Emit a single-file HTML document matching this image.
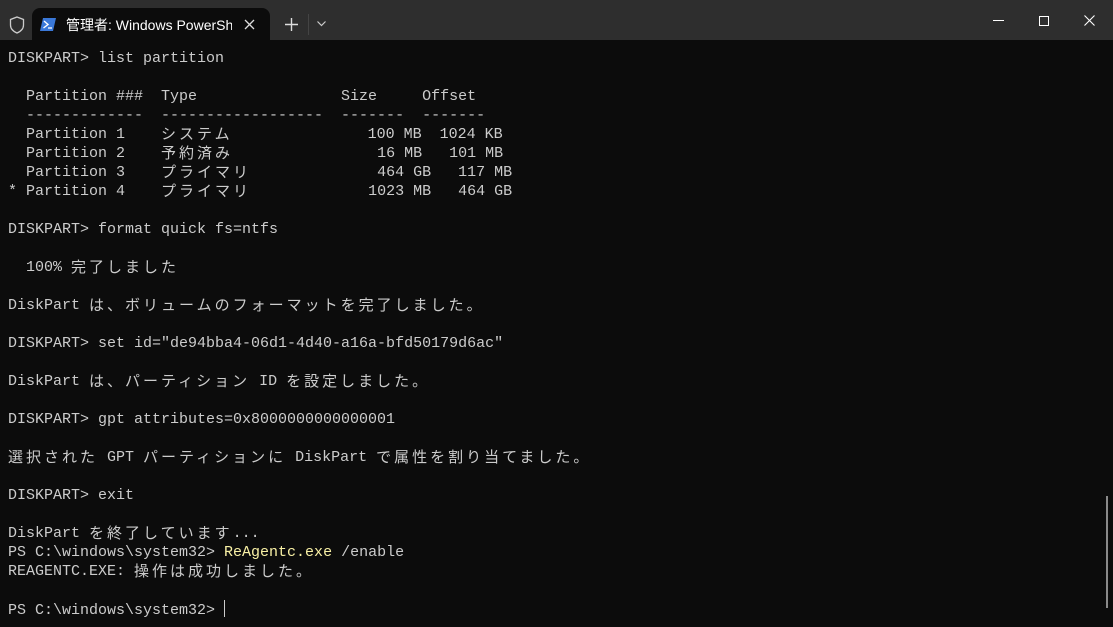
<!DOCTYPE html>
<html><head><meta charset="utf-8"><style>
html,body{margin:0;padding:0;width:1113px;height:627px;overflow:hidden;background:#0c0c0c}
.title{position:absolute;left:0;top:0;width:1113px;height:40px;background:#2e2e2e}
.tab{position:absolute;left:32px;top:8px;width:238px;height:32px;background:#0c0c0c;border-radius:8px 8px 0 0}
.tt{position:absolute;left:66px;top:15px;font:14px "Liberation Sans","Noto Sans CJK JP",sans-serif;color:#fff;white-space:nowrap;width:166px;overflow:hidden}
pre{position:absolute;left:8px;top:49px;margin:0;font:15px/19px "Liberation Mono",monospace;color:#cccccc}
.j{font-family:"Noto Sans CJK JP",sans-serif;letter-spacing:3px;font-size:15px;display:inline-block;height:19px;line-height:19px;vertical-align:top;position:relative;top:-1px}
.y{color:#f9f1a5}
.cur{display:inline-block;width:1px;height:17px;background:#ccc;vertical-align:-3px}
.sb{position:absolute;left:1106px;top:496px;width:2px;height:112px;background:#8a8a8a}
</style></head><body>
<div class="title">
<svg style="position:absolute;left:9px;top:16px" width="16" height="18" viewBox="0 0 16 18"><path d="M8 1 L14.5 3.5 V9 C14.5 13 11.5 15.5 8 17 C4.5 15.5 1.5 13 1.5 9 V3.5 Z" fill="none" stroke="#ccc" stroke-width="1.3"/></svg>
<div class="tab"></div>
<svg style="position:absolute;left:40px;top:18px" width="16" height="13" viewBox="0 0 16 13"><path d="M3 0 H16 L13 13 H0 Z" fill="#3a78d8"/><path d="M4 3 L8 6.5 L3.5 10" stroke="#fff" stroke-width="1.4" fill="none"/><path d="M8 10 H12" stroke="#fff" stroke-width="1.3"/></svg>
<div class="tt">管理者: Windows PowerShell</div>
<svg style="position:absolute;left:244px;top:19px" width="11" height="11"><path d="M1 1 L10 10 M10 1 L1 10" stroke="#ddd" stroke-width="1.3"/></svg>
<svg style="position:absolute;left:285px;top:18px" width="13" height="13"><path d="M6.5 0 V13 M0 6.5 H13" stroke="#ddd" stroke-width="1.4"/></svg>
<div style="position:absolute;left:308px;top:14px;width:1px;height:21px;background:#444"></div>
<svg style="position:absolute;left:317px;top:21px" width="9" height="6"><path d="M0.5 0.5 L4.5 4.5 L8.5 0.5" stroke="#ccc" stroke-width="1.2" fill="none"/></svg>
<div style="position:absolute;left:993px;top:20px;width:11px;height:1px;background:#fff"></div>
<div style="position:absolute;left:1039px;top:16px;width:8px;height:8px;border:1px solid #fff"></div>
<svg style="position:absolute;left:1084px;top:15px" width="11" height="11"><path d="M0.5 0.5 L10.5 10.5 M10.5 0.5 L0.5 10.5" stroke="#fff" stroke-width="1.1"/></svg>
</div>
<pre>DISKPART&gt; list partition

  Partition ###  Type                Size     Offset
  -------------  ------------------  -------  -------
  Partition 1    <span class="j">システム</span>               100 MB  1024 KB
  Partition 2    <span class="j">予約済み</span>                16 MB   101 MB
  Partition 3    <span class="j">プライマリ</span>              464 GB   117 MB
* Partition 4    <span class="j">プライマリ</span>             1023 MB   464 GB

DISKPART&gt; format quick fs=ntfs

  100% <span class="j">完了しました</span>

DiskPart <span class="j">は、ボリュームのフォーマットを完了しました。</span>

DISKPART&gt; set id="de94bba4-06d1-4d40-a16a-bfd50179d6ac"

DiskPart <span class="j">は、パーティション</span> ID <span class="j">を設定しました。</span>

DISKPART&gt; gpt attributes=0x8000000000000001

<span class="j">選択された</span> GPT <span class="j">パーティションに</span> DiskPart <span class="j">で属性を割り当てました。</span>

DISKPART&gt; exit

DiskPart <span class="j">を終了しています</span>...
PS C:\windows\system32&gt; <span class="y">ReAgentc.exe</span> /enable
REAGENTC.EXE: <span class="j">操作は成功しました。</span>

PS C:\windows\system32&gt; <span class="cur"></span></pre>
<div class="sb"></div>
</body></html>
